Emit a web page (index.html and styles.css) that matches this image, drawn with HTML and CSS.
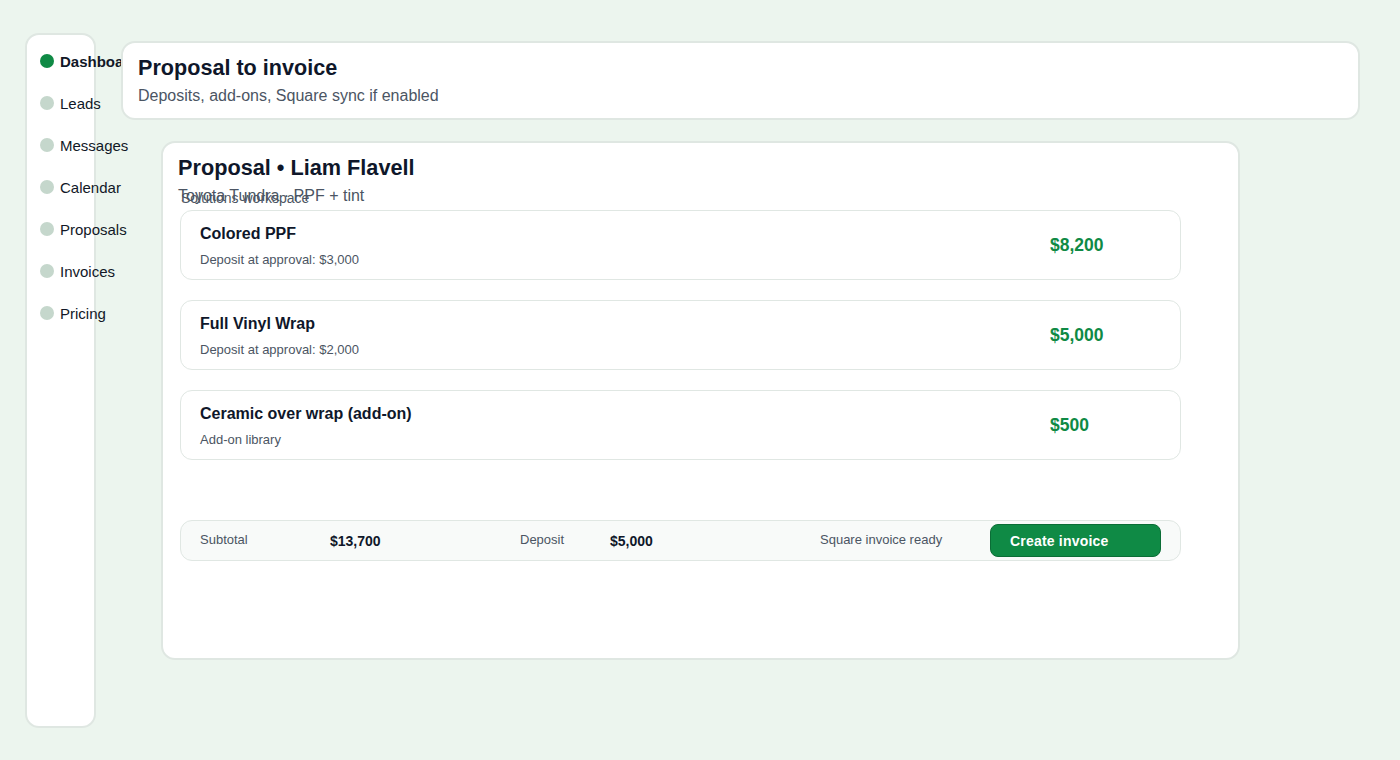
FILE: index.html
```html
<!DOCTYPE html>
<html>
<head>
<meta charset="utf-8">
<link rel="stylesheet" href="styles.css">
</head>
<body>
<div class="app">
  <nav class="sidebar">
    <div class="nav-item active"><span class="dot"></span><span>Dashboard</span></div>
    <div class="nav-item"><span class="dot"></span><span>Leads</span></div>
    <div class="nav-item"><span class="dot"></span><span>Messages</span></div>
    <div class="nav-item"><span class="dot"></span><span>Calendar</span></div>
    <div class="nav-item"><span class="dot"></span><span>Proposals</span></div>
    <div class="nav-item"><span class="dot"></span><span>Invoices</span></div>
    <div class="nav-item"><span class="dot"></span><span>Pricing</span></div>
  </nav>
  <div class="content">
    <header class="page-head">
      <h1>Proposal to invoice</h1>
      <p>Deposits, add-ons, Square sync if enabled</p>
    </header>
    <section class="card">
      <h2>Proposal • Liam Flavell</h2>
      <p class="vehicle">Toyota Tundra · PPF + tint</p>
      <div class="workspace">Solutions workspace</div>
      <div class="items">
        <div class="item">
          <div class="item-info">
            <div class="item-title">Colored PPF</div>
            <div class="item-sub">Deposit at approval: $3,000</div>
          </div>
          <div class="price">$8,200</div>
        </div>
        <div class="item">
          <div class="item-info">
            <div class="item-title">Full Vinyl Wrap</div>
            <div class="item-sub">Deposit at approval: $2,000</div>
          </div>
          <div class="price">$5,000</div>
        </div>
        <div class="item">
          <div class="item-info">
            <div class="item-title">Ceramic over wrap (add-on)</div>
            <div class="item-sub">Add-on library</div>
          </div>
          <div class="price">$500</div>
        </div>
      </div>
      <div class="totals">
        <span class="label">Subtotal</span>
        <span class="value">$13,700</span>
        <span class="label">Deposit</span>
        <span class="value">$5,000</span>
        <span class="label">Square invoice ready</span>
        <button class="btn">Create invoice</button>
      </div>
    </section>
  </div>
</div>
</body>
</html>
```
FILE: styles.css
```css
* { box-sizing: border-box; }
html, body { margin: 0; padding: 0; }
body {
  background: #ecf5ee;
  font-family: "Liberation Sans", Arial, sans-serif;
  color: #0f172a;
  width: 1400px;
  height: 760px;
  overflow: hidden;
}
.app {
  display: flex;
  align-items: flex-start;
  padding-left: 25px;
}
.sidebar {
  width: 71px;
  height: 695px;
  margin-top: 33px;
  background: #fff;
  border: 2px solid #dfe7e2;
  border-radius: 14px;
  padding: 16px 0 0 13px;
  display: flex;
  flex-direction: column;
  gap: 22px;
}
.nav-item {
  display: flex;
  align-items: center;
  gap: 6px;
  height: 20px;
  font-size: 15px;
  white-space: nowrap;
  color: #111827;
}
.nav-item.active { font-weight: 700; }
.dot {
  width: 14px;
  height: 14px;
  border-radius: 50%;
  background: #c5d7cc;
  flex: none;
}
.nav-item.active .dot { background: #0f8a45; }
.content {
  position: relative;
  z-index: 1;
  margin-left: 25px;
  margin-top: 41px;
  width: 1239px;
}
.page-head {
  background: #fff;
  border: 2px solid #dfe7e2;
  border-radius: 14px;
  height: 79px;
  padding: 12px 15px 0;
}
.page-head h1 {
  margin: 0;
  font-size: 21.6px;
  line-height: 26px;
  font-weight: 700;
  color: #0f172a;
}
.page-head p {
  margin: 5px 0 0;
  font-size: 16px;
  line-height: 20px;
  color: #4b5563;
}
.card {
  margin-top: 21px;
  margin-left: 40px;
  width: 1079px;
  height: 519px;
  background: #fff;
  border: 2px solid #dfe7e2;
  border-radius: 14px;
  padding: 12px 15px 0;
}
.card h2 {
  margin: 0;
  font-size: 21.7px;
  line-height: 26px;
  font-weight: 700;
  color: #0f172a;
}
.vehicle {
  margin: 5px 0 0;
  font-size: 16px;
  line-height: 20px;
  color: #4b5563;
}
.workspace {
  margin: -17px 0 0 3px;
  font-size: 14px;
  line-height: 18px;
  color: #4b5563;
}
.items {
  margin: 3px 0 0 2px;
  display: flex;
  flex-direction: column;
  gap: 20px;
}
.item {
  width: 1001px;
  height: 70px;
  border: 1px solid #e0e7e3;
  border-radius: 12px;
  padding: 13px 20px 0 19px;
  display: grid;
  grid-template-columns: 1fr 111px;
  align-items: start;
}
.item-title {
  font-size: 16px;
  line-height: 20px;
  font-weight: 700;
  color: #0f172a;
}
.item-sub {
  margin-top: 8px;
  font-size: 13px;
  line-height: 16px;
  color: #4b5563;
}
.price {
  align-self: center;
  margin-top: -12px;
  padding-left: 1px;
  font-size: 17.5px;
  font-weight: 700;
  color: #0f8a45;
}
.totals {
  margin: 60px 0 0 2px;
  width: 1001px;
  height: 41px;
  background: #f8faf9;
  border: 1px solid #e0e7e3;
  border-radius: 12px;
  padding: 3px 19px 3px 19px;
  display: grid;
  grid-template-columns: 130px 190px 90px 210px 170px 171px;
  align-items: center;
}
.label {
  font-size: 13px;
  color: #4b5563;
  margin-top: -2px;
}
.value {
  font-size: 14px;
  font-weight: 700;
  color: #0f172a;
}
.btn {
  height: 33px;
  width: 171px;
  background: #0f8a45;
  border: 1px solid #0b6d36;
  border-radius: 8px;
  color: #fff;
  font-family: "Liberation Sans", Arial, sans-serif;
  font-size: 14px;
  font-weight: 700;
  letter-spacing: 0.2px;
  text-align: left;
  padding: 0 0 0 19px;
}
```
